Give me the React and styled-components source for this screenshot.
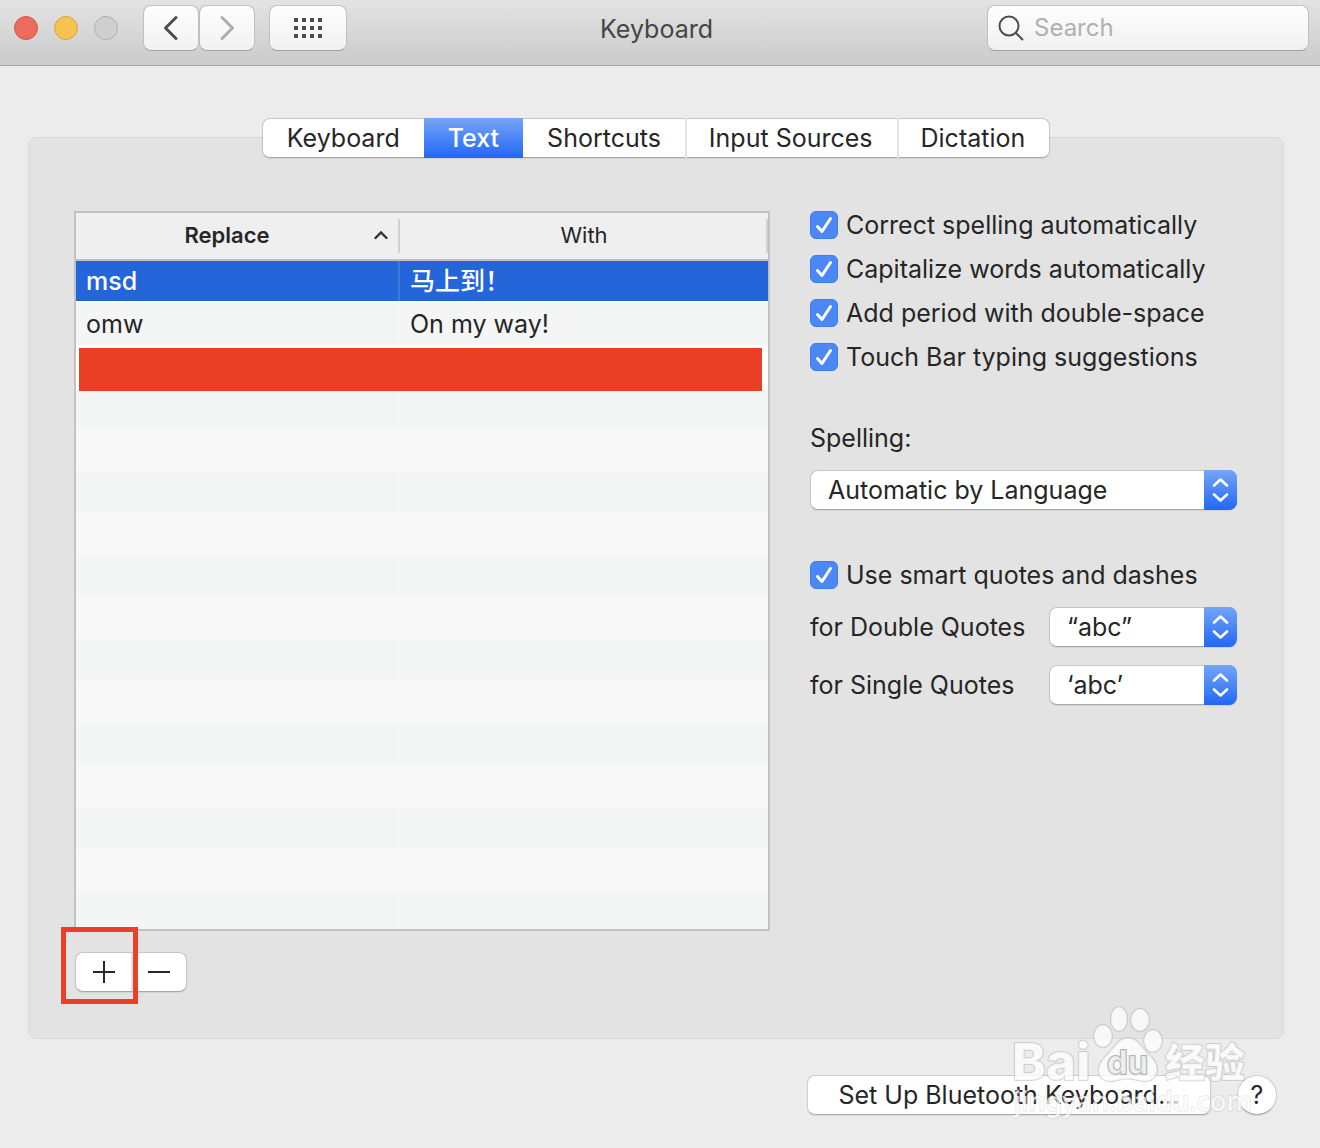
import React, {useState} from "react";
import styled, {createGlobalStyle} from "styled-components";

const GlobalStyle = createGlobalStyle`
    * {
        box-sizing: border-box;
    }
    body {
        margin: 0;
        background: #ececec;
        color: #262626;
        font-family: Inter, "Noto Sans CJK SC", sans-serif;
        font-size: 25px;
        line-height: 32px;
    }
    button, input, select {
        font: inherit;
        color: inherit;
        margin: 0;
    }
`;

const Window = styled.div`
    min-height: 100vh;
`;

const TitleBar = styled.header`
    display: grid;
    grid-template-columns: 1fr auto 1fr;
    align-items: center;
    height: 66px;
    padding: 0 11px 10px 14px;
    background: linear-gradient(#e3e3e3, #cbcbcb);
    border-bottom: 1px solid #a4a4a4;
`;

const Title = styled.h1`
    margin: 0;
    padding: 2px 10px 0 0;
    font-size: 25px;
    font-weight: 400;
    color: #454545;
`;

const Controls = styled.div`
    display: flex;
    align-items: center;
`;

const Lights = styled.div`
    display: flex;
    gap: 16px;
    margin-right: 25px;
`;

const lightColors = {
    close: ["#ed6a5f", "#d5574c"],
    minimize: ["#f6c251", "#dba33b"],
    zoom: ["#cfcfcf", "#b0b0b0"],
};

const Light = styled.button`
    width: 24px;
    height: 24px;
    padding: 0;
    border-radius: 50%;
    background: ${(props) => lightColors[props.$kind][0]};
    border: 1px solid ${(props) => lightColors[props.$kind][1]};
`;

const BarButton = styled.button`
    display: flex;
    align-items: center;
    justify-content: center;
    width: ${(props) => (props.$wide ? 78 : 56)}px;
    height: 46px;
    margin-left: ${(props) => (props.$wide ? 14 : 0)}px;
    padding: 0;
    border: 1px solid #c0c0c0;
    border-bottom-color: #a0a0a0;
    border-radius: 8px;
    background: linear-gradient(#fefefe, #f1f1f1);
`;

const SearchField = styled.label`
    display: flex;
    align-items: center;
    justify-self: end;
    gap: 10px;
    width: 322px;
    height: 46px;
    padding: 0 10px;
    border: 1px solid #c0c0c0;
    border-bottom-color: #a0a0a0;
    border-radius: 8px;
    background: linear-gradient(#fefefe, #f1f1f1);

    svg {
        flex: none;
    }
    input {
        flex: 1;
        min-width: 0;
        padding: 0;
        border: 0;
        outline: none;
        background: none;
        font-size: 24px;
    }
    input::placeholder {
        color: #b0b0b0;
    }
`;

const Content = styled.main`
    display: flex;
    flex-direction: column;
    padding: 52px 36px 33px 28px;
`;

const Tabs = styled.div`
    position: relative;
    z-index: 1;
    display: flex;
    align-self: center;
    height: 40px;
    margin-bottom: -21px;
    border: 1px solid #c6c6c6;
    border-bottom-color: #a8a8a8;
    border-radius: 8px;
    background: white;
    box-shadow: 0 1px 1px rgba(0, 0, 0, 0.08);
`;

const Tab = styled.button`
    height: 40px;
    margin: -1px 0;
    padding: 0 24px;
    border: 0;
    background: ${(props) => (props.$active ? "linear-gradient(#75a5f7, #2268f6)" : "none")};
    color: ${(props) => (props.$active ? "white" : "inherit")};
    font-weight: ${(props) => (props.$active ? 500 : 400)};
    box-shadow: ${(props) => (props.$divided ? "inset 2px 0 #e2e2e2" : "none")};
`;

const Panel = styled.section`
    display: grid;
    grid-template-columns: minmax(0, 1fr) 427px;
    gap: 40px;
    align-items: start;
    padding: 73px 46px 46px 45px;
    border: 1px solid #d9d9d9;
    border-radius: 8px;
    background: #e3e3e3;
`;

const TableFrame = styled.div`
    position: relative;
    border: 2px solid #c3c3c3;
    background: white;
`;

const Table = styled.table`
    width: 100%;
    table-layout: fixed;
    border-collapse: separate;
    border-spacing: 0;
`;

const HeadCell = styled.th`
    position: relative;
    width: ${(props) => props.$width || "auto"};
    height: 48px;
    padding: 0 0 2px;
    border-bottom: 2px solid #c0c0c0;
    background: #efefef;
    font-size: 22px;
    font-weight: ${(props) => (props.$sorted ? 600 : 400)};

    &::after {
        content: "";
        position: absolute;
        top: 6px;
        right: 0;
        width: 2px;
        height: 34px;
        background: #d2d2d2;
    }
`;

const SortButton = styled.button`
    display: grid;
    grid-template-columns: 1fr auto 1fr;
    align-items: center;
    width: 100%;
    padding: 0 12px 0 0;
    border: 0;
    background: none;
    font-weight: ${(props) => (props.$sorted ? 600 : 400)};

    span {
        grid-column: 2;
        padding-right: 10px;
    }
    svg {
        justify-self: end;
    }
`;

const Row = styled.tr`
    background: ${(props) => (props.$index % 2 ? "#f4f5f5" : "#f8f8f8")};
    background: ${(props) => props.$selected && "#2565da"};
    color: ${(props) => (props.$selected ? "white" : "inherit")};
    font-weight: ${(props) => (props.$selected ? 500 : 400)};

    td {
        height: 42px;
        padding: 0 0 0 10px;
        line-height: 38px;
        border-bottom: ${(props) => (props.$selected ? "2px solid white" : "0")};
    }
    td:first-child {
        box-shadow: inset -2px 0 rgba(255, 255, 255, 0.12);
    }
    &:last-child td {
        height: 38px;
    }
`;

const RedBar = styled.div`
    position: absolute;
    top: 132px;
    left: 0;
    right: 0;
    height: 46px;
    border: solid white;
    border-width: 3px 6px 0 3px;
    background: #eb4026;
`;

const EditButtons = styled.div`
    position: relative;
    display: inline-flex;
    height: 40px;
    margin: 21px 0 0 1px;
    border: 1px solid #c6c6c6;
    border-bottom-color: #a8a8a8;
    border-radius: 8px;
    background: white;
    box-shadow: 0 1px 1px rgba(0, 0, 0, 0.08);
`;

const EditButton = styled.button`
    display: flex;
    align-items: center;
    justify-content: center;
    width: 55px;
    padding: 0;
    border: 0;
    background: none;

    & + & {
        box-shadow: inset 2px 0 #e2e2e2;
    }
`;

const RedFrame = styled.div`
    position: absolute;
    top: -26px;
    left: -15px;
    width: 77px;
    height: 77px;
    border: 5px solid #eb4026;
    pointer-events: none;
`;

const Options = styled.div`
    display: flex;
    flex-direction: column;
`;

const CheckList = styled.div`
    display: flex;
    flex-direction: column;
    gap: 16px;
`;

const CheckLabel = styled.label`
    display: flex;
    align-items: center;
    gap: 8px;
    height: 28px;
    white-space: nowrap;
`;

const CheckBox = styled.span`
    display: grid;
    flex: none;
    width: 28px;
    height: 28px;

    input,
    svg {
        grid-area: 1 / 1;
        width: 28px;
        height: 28px;
    }
    input {
        appearance: none;
        border: 1px solid #3f7de8;
        border-radius: 6px;
        background: #4b87f5;
    }
    input:not(:checked) {
        border-color: #c0c0c0;
        background: white;
    }
    input:not(:checked) + svg {
        display: none;
    }
    svg {
        pointer-events: none;
    }
`;

const SpellingField = styled.div`
    display: flex;
    flex-direction: column;
    gap: 16px;
    margin: 51px 0;
`;

const QuoteField = styled.div`
    display: flex;
    align-items: center;
    justify-content: space-between;
    height: 40px;
    margin-top: 18px;
`;

const SelectFrame = styled.div`
    position: relative;
    width: ${(props) => (props.$small ? "188px" : "100%")};

    select {
        display: block;
        appearance: none;
        width: 100%;
        height: 40px;
        padding: 0 40px 0 17px;
        border: 1px solid #c6c6c6;
        border-bottom-color: #a8a8a8;
        border-radius: 8px;
        background: white;
        box-shadow: 0 1px 1px rgba(0, 0, 0, 0.08);
    }
`;

const Stepper = styled.span`
    position: absolute;
    top: 0;
    right: 0;
    display: flex;
    align-items: center;
    justify-content: center;
    width: 33px;
    height: 40px;
    border-radius: 0 8px 8px 0;
    background: linear-gradient(#75a5f7, #2268f6);
    pointer-events: none;
`;

const Footer = styled.footer`
    position: relative;
    display: flex;
    justify-content: flex-end;
    gap: 26px;
    padding: 36px 7px 0 0;
`;

const PushButton = styled.button`
    width: ${(props) => (props.$round ? "40px" : "404px")};
    height: 40px;
    padding: 0;
    border: 1px solid #cdcdcd;
    border-bottom-color: #ababab;
    border-radius: ${(props) => (props.$round ? "50%" : "8px")};
    background: white;
    box-shadow: 0 1px 1px rgba(0, 0, 0, 0.08);
`;

const Watermark = styled.svg`
    position: absolute;
    right: 32px;
    bottom: -6px;
    pointer-events: none;

    text, ellipse, path {
        paint-order: stroke;
    }
`;

const tabs = ["Keyboard", "Text", "Shortcuts", "Input Sources", "Dictation"];

const replacements = [
    {replace: "msd", with: "马上到！"},
    {replace: "omw", with: "On my way!"},
];

const checks = [
    "Correct spelling automatically",
    "Capitalize words automatically",
    "Add period with double-space",
    "Touch Bar typing suggestions",
];

const ROWS = 16;

function Chevron({back}) {
    return (
        <svg width="16" height="26" viewBox="0 0 16 26" fill="none" stroke={back ? "#4d4d4d" : "#adadad"}
             strokeWidth="3" strokeLinecap="round" strokeLinejoin="round">
            <path d={back ? "M13 2.5 2.5 13 13 23.5" : "M3 2.5 13.5 13 3 23.5"}/>
        </svg>
    );
}

function GridIcon() {
    const dots = [];
    for (let y = 0; y < 3; y++) {
        for (let x = 0; x < 4; x++) {
            dots.push(<rect key={`${x}-${y}`} x={x * 8} y={y * 8} width="4" height="4"/>);
        }
    }
    return <svg width="28" height="20" fill="#4d4d4d">{dots}</svg>;
}

function Check({label}) {
    const [checked, setChecked] = useState(true);

    return (
        <CheckLabel>
            <CheckBox>
                <input type="checkbox" checked={checked} onChange={(e) => setChecked(e.target.checked)}/>
                <svg viewBox="0 0 28 28" fill="none" stroke="white" strokeWidth="3"
                     strokeLinecap="round" strokeLinejoin="round">
                    <path d="M7.5 15.5 12 20.5 20.5 7.5"/>
                </svg>
            </CheckBox>
            {label}
        </CheckLabel>
    );
}

function Select({id, options, small}) {
    return (
        <SelectFrame $small={small}>
            <select id={id}>
                {options.map((option) => <option key={option}>{option}</option>)}
            </select>
            <Stepper>
                <svg width="17" height="26" viewBox="0 0 17 26" fill="none" stroke="white" strokeWidth="2.6"
                     strokeLinecap="round" strokeLinejoin="round">
                    <path d="M2 8.5 8.5 2.5 15 8.5M2 17.5 8.5 23.5 15 17.5"/>
                </svg>
            </Stepper>
        </SelectFrame>
    );
}

function BaiduMark() {
    return (
        <Watermark width="240" height="116" viewBox="0 0 240 116" fill="white" fillOpacity="0.75"
                   stroke="#a0a0a0" strokeOpacity="0.4" strokeWidth="2" strokeLinejoin="round">
            <text x="0" y="75" fontSize="51" fontWeight="800">Bai</text>
            <ellipse cx="91" cy="31" rx="9" ry="11"/>
            <ellipse cx="107" cy="14" rx="8" ry="12"/>
            <ellipse cx="128" cy="15" rx="9" ry="11"/>
            <ellipse cx="141" cy="36" rx="9" ry="11"/>
            <path d="M116 33C125 33 129 42 136 49C143 55 147 62 144 69C141 77 132 77 126 75C119 73 112 73 106 75C99 77 90 77 87 69C85 61 90 55 96 49C103 42 107 33 116 33Z"/>
            <text x="95" y="69" fontSize="33" fontWeight="700" fill="#ededed" strokeOpacity="0.8">du</text>
            <text x="153" y="72" fontSize="40" fontWeight="900">经验</text>
            <text x="2" y="106" fontSize="27" fontWeight="500" fontFamily="Noto Sans, sans-serif"
                  strokeOpacity="0.2">jingyan.baidu.com</text>
        </Watermark>
    );
}

export default function App() {
    const [activeTab, setActiveTab] = useState("Text");
    const [selected, setSelected] = useState(0);
    const activeIndex = tabs.indexOf(activeTab);

    return (
        <Window>
            <GlobalStyle/>
            <TitleBar>
                <Controls>
                    <Lights>
                        <Light $kind="close" aria-label="Close"/>
                        <Light $kind="minimize" aria-label="Minimize"/>
                        <Light $kind="zoom" aria-label="Zoom" disabled/>
                    </Lights>
                    <BarButton aria-label="Back"><Chevron back/></BarButton>
                    <BarButton aria-label="Forward"><Chevron/></BarButton>
                    <BarButton $wide aria-label="Show all"><GridIcon/></BarButton>
                </Controls>
                <Title>Keyboard</Title>
                <SearchField>
                    <svg width="26" height="26" viewBox="0 0 26 26" fill="none" stroke="#4d4d4d" strokeWidth="2">
                        <circle cx="11" cy="11" r="9.5"/>
                        <path d="M17.5 17.5 25 25"/>
                    </svg>
                    <input type="search" placeholder="Search" aria-label="Search"/>
                </SearchField>
            </TitleBar>
            <Content>
                <Tabs role="tablist">
                    {tabs.map((tab, i) => (
                        <Tab key={tab} role="tab" aria-selected={tab === activeTab} $active={tab === activeTab}
                             $divided={i > 0 && i !== activeIndex && i !== activeIndex + 1}
                             onClick={() => setActiveTab(tab)}>
                            {tab}
                        </Tab>
                    ))}
                </Tabs>
                <Panel>
                    <div>
                        <TableFrame>
                            <Table>
                                <thead>
                                    <tr>
                                        <HeadCell $width="324px" aria-sort="ascending">
                                            <SortButton $sorted>
                                                <span>Replace</span>
                                                <svg width="14" height="10" viewBox="0 0 14 10" fill="none"
                                                     stroke="#333" strokeWidth="2.4" strokeLinecap="round">
                                                    <path d="M1.5 8 7 2.5 12.5 8"/>
                                                </svg>
                                            </SortButton>
                                        </HeadCell>
                                        <HeadCell>With</HeadCell>
                                    </tr>
                                </thead>
                                <tbody>
                                    {Array.from({length: ROWS}, (_, i) => {
                                        const item = replacements[i];
                                        return (
                                            <Row key={i} $index={i} $selected={i === selected}
                                                 onClick={() => item && setSelected(i)}>
                                                <td>{item && item.replace}</td>
                                                <td>{item && item.with}</td>
                                            </Row>
                                        );
                                    })}
                                </tbody>
                            </Table>
                            <RedBar/>
                        </TableFrame>
                        <EditButtons>
                            <EditButton aria-label="Add">
                                <svg width="22" height="22" stroke="#262626" strokeWidth="2">
                                    <path d="M0 11H22M11 0V22"/>
                                </svg>
                            </EditButton>
                            <EditButton aria-label="Remove">
                                <svg width="22" height="22" stroke="#262626" strokeWidth="2">
                                    <path d="M0 11H22"/>
                                </svg>
                            </EditButton>
                            <RedFrame/>
                        </EditButtons>
                    </div>
                    <Options>
                        <CheckList>
                            {checks.map((label) => <Check key={label} label={label}/>)}
                        </CheckList>
                        <SpellingField>
                            <label htmlFor="spelling">Spelling:</label>
                            <Select id="spelling" options={["Automatic by Language"]}/>
                        </SpellingField>
                        <Check label="Use smart quotes and dashes"/>
                        <QuoteField>
                            <label htmlFor="double-quotes">for Double Quotes</label>
                            <Select id="double-quotes" options={["“abc”"]} small/>
                        </QuoteField>
                        <QuoteField>
                            <label htmlFor="single-quotes">for Single Quotes</label>
                            <Select id="single-quotes" options={["‘abc’"]} small/>
                        </QuoteField>
                    </Options>
                </Panel>
                <Footer>
                    <PushButton>Set Up Bluetooth Keyboard...</PushButton>
                    <PushButton $round aria-label="Help">?</PushButton>
                    <BaiduMark/>
                </Footer>
            </Content>
        </Window>
    );
}
